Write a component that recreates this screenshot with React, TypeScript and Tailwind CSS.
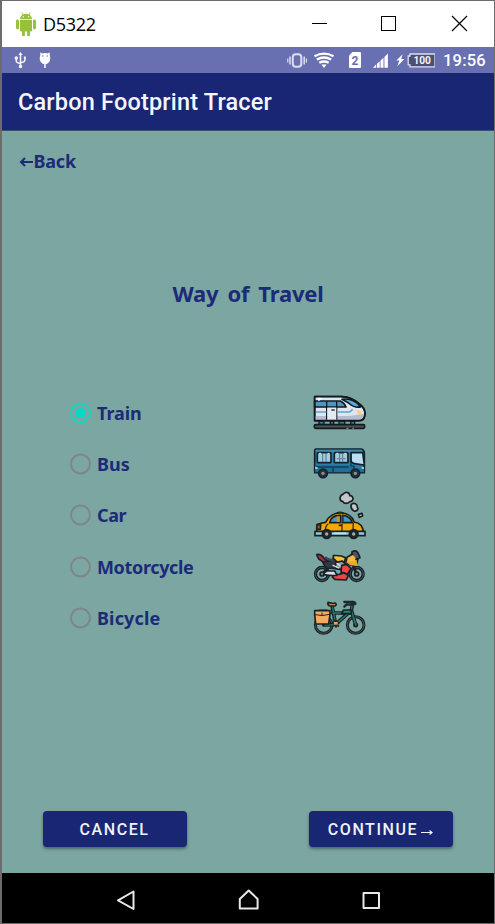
import React, { useState } from "react";

function AndroidLogo() {
  return (
    <svg className="h-6 w-5" viewBox="0 0 20 24" fill="#97c03d">
      <path d="M4 7.2C4.2 4.8 5.6 3.3 6.6 2.6L5.3.6l.6-.3 1.4 2a8 8 0 0 1 5.4 0l1.4-2 .6.3-1.3 2C14.6 3.3 15.8 4.8 16 7.2z" />
      <circle cx="7.3" cy="4.8" r=".7" fill="#fff" />
      <circle cx="12.7" cy="4.8" r=".7" fill="#fff" />
      <path d="M4 8h12v10.500a1 1 0 0 1-1 1h-1V23a1.400 1.400 0 0 1-2.900 0v-3.500H8.900V23A1.400 1.400 0 0 1 6 23v-3.500H5a1 1 0 0 1-1-1z" />
      <rect x="0" y="7.500" width="3" height="10" rx="1.400" />
      <rect x="17" y="7.500" width="3" height="10" rx="1.400" />
    </svg>
  );
}

function TitleBar() {
  return (
    <div className="flex h-[46px] items-center bg-white pl-[14px] font-['Open_Sans','Noto_Sans',sans-serif]">
      <AndroidLogo />
      <span className="ml-[7px] text-[18px] tracking-[-0.300px] text-black">D5322</span>
      <svg className="ml-auto h-[46px] w-[190px]" viewBox="0 0 190 46" fill="none" stroke="#000" shapeRendering="crispEdges">
        <path d="M8 22.500h15M77.500 15.500h14v14h-14z" />
        <path d="M148 15l15 15M163 15l-15 15" shapeRendering="auto" strokeWidth="1.200" />
      </svg>
    </div>
  );
}

function StatusBar() {
  return (
    <div className="flex h-[26px] items-center bg-[#6870b2] font-[Roboto,sans-serif] text-white">
      <svg className="h-[26px] w-[60px]" viewBox="0 0 60 26" fill="none" stroke="#f4f4fb" strokeWidth="1.600">
        <path d="M18.500 7v13M14.300 11v3q0 1.800 4.200 2.500M22.800 10.500v2.700q0 1.800-4.300 2.500" />
        <path d="M18.500 5l2.200 3h-4.400z" fill="#f4f4fb" stroke="none" />
        <circle cx="18.500" cy="19.500" r="1.700" fill="#f4f4fb" stroke="none" />
        <circle cx="14.300" cy="11" r="1" fill="#f4f4fb" />
        <path d="M21.800 9.500h2v2h-2z" fill="#f4f4fb" stroke="none" />
        <path d="M38.300 5.300l1.900 1.200a7 7 0 0 1 5.600 0l1.900-1.200v2.900c1.700 4.800-.6 8.600-4.700 9.100-4.100-.5-6.400-4.300-4.700-9.100z" fill="#fff" stroke="none" />
        <path d="M43 17v4" />
        <circle cx="40.800" cy="9" r=".7" fill="#6870b2" stroke="none" />
        <circle cx="45.200" cy="9" r=".7" fill="#6870b2" stroke="none" />
      </svg>
      <svg className="ml-auto h-[26px] w-[150px]" viewBox="0 0 150 26" fill="none" stroke="#dcdef0">
        <rect x="7.800" y="7.200" width="8.500" height="12.600" rx="3" strokeWidth="2" />
        <path d="M5 9.500v8M19.200 9.500v8" strokeWidth="1.500" />
        <path d="M2.800 11.500v4M21.400 11.500v4" strokeWidth="1.200" />
        <g stroke="#fff" strokeWidth="2.400">
          <path d="M29.500 9.300q9.500-5.300 19 0M31.800 12.500q7.200-4.100 14.400 0M34.300 15.700q4.700-2.500 9.400 0" />
          <path d="M36.500 17.400h5L39 21z" fill="#fff" stroke="none" />
        </g>
        <path d="M67.500 5H75q1 0 1 1v14q0 1-1 1H65q-1 0-1-1V8.500z" fill="#fff" stroke="none" />
        <text x="70" y="17.600" textAnchor="middle" fontSize="12" fontWeight="700" fill="#6870b2" stroke="none">2</text>
        <path d="M88 20.800h3v-3.200zM91.800 20.800h2.900v-6.600l-2.900 2.700zM95.500 20.800h3v-10l-3 2.700zM99.400 20.800h3.500V6.500L99.400 10z" fill="#fff" stroke="none" />
        <path d="M117.700 7.200l-6.400 6.200h3.100l-2.200 6.200 7.100-7.700h-3.200z" fill="#fff" stroke="none" />
        <path d="M125 7h25v12.800h-25v-2h-1.800v-8.800h1.800z" fill="#4b4f76" strokeWidth="1.300" />
        <text x="137.200" y="17.100" textAnchor="middle" fontSize="10.200" fontWeight="700" fill="#f4f4f4" stroke="none">100</text>
      </svg>
      <span className="mt-[2px] ml-[8.500px] w-[51px] text-[16.500px] font-medium tracking-[0.200px]">19:56</span>
    </div>
  );
}

function TrainIcon() {
  return (
    <svg className="h-[51px] w-[54px]" viewBox="36 7 162 153" stroke="#14191d" strokeWidth="5" strokeLinejoin="round">
      <path d="M44 36h81c22 1 38 9 52 21 15 10 20 22 17 37-2 10-8 14-17 14H44z" fill="#e1e5ef" />
      <path d="M46 38h76l10 10H46z" fill="#d7e8f4" stroke="none" />
      <path d="M45 94h91c20 0 35-5 57-7-2 12-5 18-17 19H45z" fill="#b5bccf" stroke="none" />
      <path d="M44 49h77c9 4 14 9 17 18H44z" fill="#4a97c4" />
      <path d="M126 44c11-2 24-1 34 4 9 4 18 12 22 19-14 2-27-3-36-12z" fill="#5aaad8" />
      <path d="M57 37v11M55 42h10" stroke="#fff" strokeWidth="5" />
      <path d="M80 49v56M110 49v56" fill="none" strokeWidth="4" />
      <path d="M45 82h34M112 82h37l9-8" stroke="#5aa6cf" strokeWidth="5" fill="none" />
      <path d="M82 69h27v36H82z" fill="#e5e9f2" stroke="none" />
      <path d="M94 76h10" strokeWidth="4" />
      <path d="M170 77l14 3v12q-12-3-14-15z" fill="#f8ce78" stroke="none" />
      <path d="M44 36h81c22 1 38 9 52 21 15 10 20 22 17 37-2 10-8 14-17 14H44z" fill="none" />
      <path d="M57 110h15v9H57zM91 110h10v9H91zM117 110h17v9h-17zM152 110h12v9h-12z" fill="#397f9f" strokeWidth="4" />
      <rect x="43" y="120" width="151" height="11" rx="4" fill="#4c535b" />
      <path d="M139 131h7M157 131h5" stroke="#d0d6d7" strokeWidth="2" />
    </svg>
  );
}

function BusIcon() {
  return (
    <svg className="h-[51px] w-[54px]" viewBox="36 -4 162 153" stroke="#12232d" strokeWidth="5" strokeLinejoin="round">
      <path d="M48 29h134c8 0 11 6 11 14v57H44V36q0-7 4-7z" fill="#287eaa" />
      <path d="M47 31h138v7H47z" fill="#4387aa" stroke="none" />
      <path d="M46 78h106l9 9h30v12H46z" fill="#1f6f9b" stroke="none" />
      <rect x="52" y="40" width="41" height="30" rx="3" fill="#a9c9df" />
      <rect x="103" y="40" width="41" height="30" rx="3" fill="#a9c9df" />
      <path d="M68 42v26M78 42v26M119 42v26M128 42v26" strokeWidth="3" stroke="#4f778e" />
      <path d="M57 42h6M83 42h5M109 42h6M133 42h6" stroke="#e9f7ff" strokeWidth="3" />
      <path d="M110 58h27" stroke="#6b8ba0" strokeWidth="4" />
      <path d="M153 40h35l5 37-30-4-10-6z" fill="#beddf1" />
      <path d="M153 43v37h9v18M99 98v-12M48 83h98" fill="none" strokeWidth="3" />
      <path d="M45 86h8M185 86h7" stroke="#e4dfae" strokeWidth="5" />
      <circle cx="69" cy="102" r="13" fill="#27333a" />
      <circle cx="166" cy="102" r="13" fill="#27333a" />
      <circle cx="69" cy="102" r="5" fill="#899197" stroke="none" />
      <circle cx="166" cy="102" r="5" fill="#899197" stroke="none" />
    </svg>
  );
}

function CarIcon() {
  return (
    <svg className="h-[51px] w-[54px]" viewBox="36 15 162 153" stroke="#19201f" strokeWidth="5" strokeLinejoin="round">
      <path d="M130 27c8-9 20-4 19 5 12-2 14 17 1 18-8 7-18 7-21 0-12-1-12-18 1-23z" fill="#c5c6cb" />
      <path d="M154 58c9-6 18-1 18 9 6 6-4 14-11 10-7-4-9-12-7-19z" fill="#c5c6cb" />
      <path d="M175 88l11-3 2 8-10 4z" fill="#c5c6cb" />
      <path d="M52 119c7-4 15-6 25-7 9-18 22-28 43-28 24 0 37 9 42 27 17 2 28 14 28 34H50z" fill="#f5a800" />
      <path d="M89 113c3-15 16-23 33-22v22zM128 91c17 1 25 9 29 22h-29z" fill="#4397c9" />
      <path d="M110 94h9v17h-9z" fill="#d9872f" stroke="none" />
      <path d="M129 93v18" stroke="#315066" strokeWidth="4" />
      <path d="M85 116c-6 5-10 12-9 25M126 116v22M160 114l-1 18M110 84q9-6 21 0" fill="none" strokeWidth="3.500" />
      <path d="M116 121h10" />
      <path d="M51 118l11 1-1 14-11-1z" fill="#b84c23" />
      <path d="M45 139h150v13H45z" fill="#93c9e3" />
      <path d="M101 145h37" stroke="#c4e6ef" strokeWidth="5" />
      <circle cx="80" cy="147" r="13" fill="#20272a" />
      <circle cx="161" cy="147" r="13" fill="#20272a" />
      <circle cx="80" cy="147" r="5" fill="#a5abad" stroke="none" />
      <circle cx="161" cy="147" r="5" fill="#a5abad" stroke="none" />
    </svg>
  );
}

function MotorcycleIcon() {
  return (
    <svg className="h-[51px] w-[54px]" viewBox="36 4 162 153" stroke="#182128" strokeWidth="5" strokeLinejoin="round" strokeLinecap="round">
      <g fill="none">
        <circle cx="66" cy="103" r="19.500" strokeWidth="10" />
        <circle cx="170" cy="103" r="19.500" strokeWidth="10" />
        <g stroke="#59636a" strokeWidth="2">
          <circle cx="66" cy="103" r="20" />
          <circle cx="170" cy="103" r="20" />
        </g>
        <path d="M66 103l28-26M170 103l-18-44 6-20" strokeWidth="8" />
      </g>
      <path d="M50 45q13-4 23 12l15 9-16 2-16-10z" fill="#a92f38" />
      <path d="M68 67l24-4 12-8 28 15-7 20-24-4-23-1z" fill="#303941" />
      <path d="M77 54q12 8 25 6" stroke="#424650" strokeWidth="7" fill="none" />
      <path d="M100 48q22-2 37 6l-5 15-22-3-10-10z" fill="#f7bf2f" />
      <path d="M141 53l17-10 17 10-5 20q-10 6-22 2l-10-8z" fill="#f4bb3c" />
      <path d="M138 67l13 10 22 2-3-15z" fill="#e7aa32" stroke="none" />
      <path d="M156 37q11-8 18 3l6 14-12 5" fill="#4f5560" />
      <path d="M108 69l18-5 13 10-12 16-22-5z" fill="#979dac" />
      <path d="M111 71l17 13M99 77l17 8" stroke="#e0e2e8" strokeWidth="4" />
      <path d="M125 77l15-3 13 12-10 17-20-5z" fill="#ef4545" />
      <path d="M104 101q9 8 27-2l14 8-6 14-34-2-8-7z" fill="#ef4545" />
      <path d="M66 103l15-9h23l7 13q-26 2-45-4z" fill="#d9dce8" />
      <circle cx="66" cy="103" r="6" fill="#747d80" />
      <circle cx="170" cy="103" r="6" fill="#8c9293" />
    </svg>
  );
}

function BicycleIcon() {
  return (
    <svg className="h-[51px] w-[54px]" viewBox="36 8 162 153" stroke="#192323" strokeWidth="5" strokeLinejoin="round" strokeLinecap="round" fill="none">
      <circle cx="71" cy="107" r="25" strokeWidth="9" />
      <circle cx="71" cy="107" r="25" stroke="#626a6d" strokeWidth="2" />
      <circle cx="167" cy="107" r="25" strokeWidth="9" />
      <circle cx="167" cy="107" r="25" stroke="#626a6d" strokeWidth="2" />
      <path d="M71 107l35-1 48-43M97 54l10 52M98 71h54M159 40l-5 22 13 45" strokeWidth="11" />
      <path d="M75 107l31-1 47-42M98 55l9 50M99 71h53M157 44l-3 18 13 45" stroke="#28796d" strokeWidth="4" />
      <path d="M130 62h24v11h-29z" fill="#208478" />
      <path d="M84 39q8 4 22 2 6 6-1 9H90q-8-2-6-11z" fill="#c9824d" />
      <path d="M133 38h24q9 0 9 6M159 46h-20l-6 6" stroke="#1c2a2b" strokeWidth="7" />
      <path d="M52 71l6-8h23l7 8" strokeWidth="5" />
      <path d="M44 64h46v11l-4 29H47l-3-29z" fill="#f3ab62" />
      <path d="M45 76q22 6 44-1M66 71v8" strokeWidth="3" />
      <path d="M103 94l13 8M101 102l14 8M108 94v18" stroke="#252d2c" strokeWidth="6" />
      <path d="M102 98h11v8h-11z" fill="#f2a34f" stroke="none" />
      <circle cx="167" cy="107" r="5" fill="#6d6753" />
      <path d="M167 105l-7-20" stroke="#28796d" />
    </svg>
  );
}

const options = [
  { name: "Train", icon: TrainIcon, spacing: "tracking-[-0.100px]" },
  { name: "Bus", icon: BusIcon, spacing: "tracking-[0px]" },
  { name: "Car", icon: CarIcon, spacing: "tracking-[-0.400px]" },
  { name: "Motorcycle", icon: MotorcycleIcon, spacing: "tracking-[-0.350px]" },
  { name: "Bicycle", icon: BicycleIcon, spacing: "tracking-[0.150px]" },
];

function TravelOptions() {
  const [selected, setSelected] = useState("Train");
  return (
    <div className="mt-[77px] flex h-[256.600px] flex-col pl-[68px]" role="radiogroup">
      {options.map(({ name, icon: Icon, spacing }) => (
        <button
          key={name}
          role="radio"
          aria-checked={selected === name}
          onClick={() => setSelected(name)}
          className="flex flex-1 items-center text-left"
        >
          <svg className="h-[22px] w-[22px]" viewBox="0 0 22 22" fill="none">
            <circle cx="10.500" cy="11" r="9.500" stroke={selected === name ? "#1dd3bf" : "#7d8784"} strokeWidth="2" />
            {selected === name && <circle cx="10.500" cy="11" r="5.200" fill="#03dac5" />}
          </svg>
          <span className={"ml-[5px] w-[215px] text-[18px] leading-[26px] font-bold " + spacing}>{name}</span>
          <Icon />
        </button>
      ))}
    </div>
  );
}

const actionStyle =
  "h-[36px] w-[144px] rounded-[4px] bg-[#192673] pt-[1px] font-[Roboto,sans-serif] text-[16px] font-medium tracking-[1.600px] text-[#f1f2f8] shadow-[0_2px_3px_rgba(20,50,50,0.500)]";

export default function App() {
  return (
    <div className="flex h-[924px] w-[495px] flex-col overflow-hidden border-t border-r border-b border-l-2 border-[#6b6c6c] bg-[#7ca6a2]">
      <TitleBar />
      <StatusBar />
      <header className="flex h-[58px] items-center border-b border-[#355568] bg-[#192673] pt-[3px] pl-[16px] font-[Roboto,sans-serif] text-[23.500px] font-medium text-[#f5f5fa]">
        <span className="tracking-[0.180px]">Carbon Footprint Tracer</span>
      </header>
      <main className="flex h-[742px] flex-col bg-[#7ca6a2] font-['Noto_Sans',sans-serif] text-[#1c2b77]">
        <button className="mt-[17px] ml-[16.500px] flex h-[26px] w-[70px] items-center text-[18px] leading-[26px] font-bold tracking-[-0.200px]">
          <svg className="h-3 w-[15px]" viewBox="0 0 15 12" fill="none" stroke="#1c2b77" strokeWidth="2">
            <path d="M14 7H2M6 3L2 7l4 4" />
          </svg>
          Back
        </button>
        <h1 className="mt-[102px] h-[34px] text-center text-[22px] leading-[34px] font-bold tracking-[-0.200px] [word-spacing:3.500px]">Way of Travel</h1>
        <TravelOptions />
        <div className="mt-auto mb-[26px] flex justify-between pr-[41px] pl-[40.500px]">
          <button className={actionStyle}>CANCEL</button>
          <button className={actionStyle + " flex items-center justify-center"}>
            CONTINUE
            <svg className="ml-[2px] h-3 w-[14px]" viewBox="0 0 14 12" fill="none" stroke="#f1f2f8" strokeWidth="1.200">
              <path d="M1 8.500h11M9.500 6.500l2.500 2-2.500 2" />
            </svg>
          </button>
        </div>
      </main>
      <nav className="flex flex-1 items-center bg-black">
        <svg className="h-[50px] w-full" viewBox="0 0 492 50" fill="none" stroke="#e8e8e8" strokeWidth="2" strokeLinejoin="round">
          <path d="M131.500 18.500v17.500L116 27.300z" />
          <path d="M237.800 35.500V26l8.900-8.500 8.900 8.500v9.500z" />
          <path d="M361.500 20h15.500v15h-15.500z" />
        </svg>
      </nav>
    </div>
  );
}
